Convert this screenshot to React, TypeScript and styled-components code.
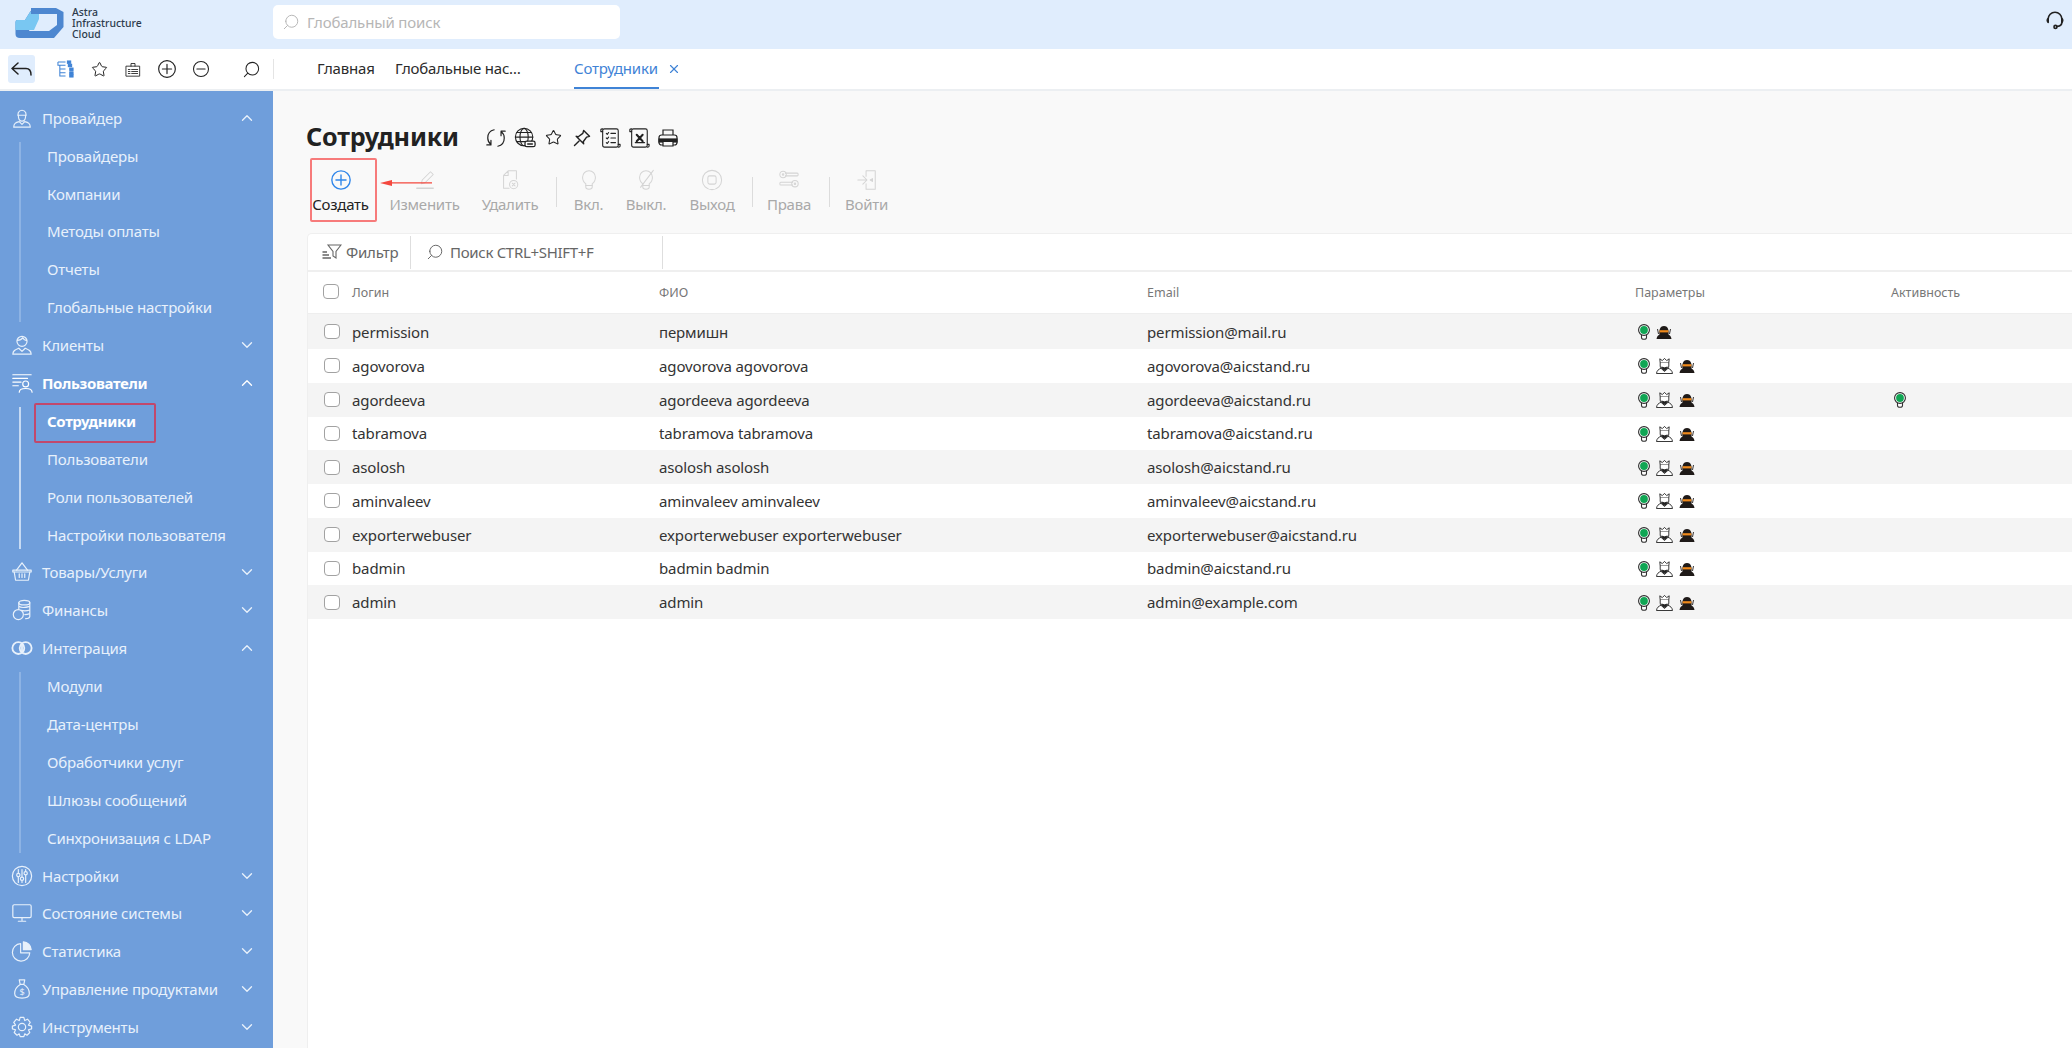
import React from "react";
import styled, { createGlobalStyle } from "styled-components";
import { ChevronDown, ChevronUp, Search, Star, X } from "lucide-react";

const GlobalStyle = createGlobalStyle`
  html, body {
    margin: 0;
    padding: 0;
    height: 100%;
    overflow: hidden;
    background: #fff;
    font-family: "Noto Sans", "Open Sans", sans-serif;
  }
  * { box-sizing: border-box; }
`;

/* ---------- icons ---------- */

const Ico = ({ size = 22, sw = 1.3, children }: { size?: number; sw?: number; children: React.ReactNode }) => (
  <svg width={size} height={size} viewBox="0 0 24 24" fill="none" stroke="currentColor" strokeWidth={sw} strokeLinecap="round" strokeLinejoin="round">
    {children}
  </svg>
);

const LogoIcon = () => (
  <svg width="49" height="32" viewBox="0 0 49 32">
    <path d="M0.5 15 Q0.5 13 2.5 13 H10 L15 5 L18 1 H41 L48.5 5 V20 L39 31 H5 Q0.5 31 0.5 27 Z" fill="#4d87d0" />
    <path d="M18 7 H42 V18 L34 24 H14 L18 14 Z" fill="#e0edfd" />
    <path d="M0.5 23 V15 Q0.5 13 2.5 13 H10 L15 5 H24 V12 L19 23 Z" fill="#79c7f2" />
    <path d="M16 1 H41 V7 H16 Z" fill="#4d87d0" />
  </svg>
);

const Headset = () => (
  <Ico size={22} sw={1.8}>
    <path d="M4.5 14 V11 a7.5 7.5 0 0 1 15 0 V14" />
    <path d="M4.5 10.5 q-1.8 1.5 0 4 z" fill="currentColor" />
    <path d="M19.5 10.5 q1.8 1.5 0 4 z" fill="currentColor" />
    <path d="M19.5 14.5 q0 4 -5 4.5" />
    <circle cx="12.5" cy="19.5" r="1.6" />
  </Ico>
);

const TreeIcon = () => (
  <svg width="18" height="18" viewBox="0 0 18 18" fill="none" stroke="#3f83d6" strokeWidth="1.1">
    <path d="M1 1.5 H9 M1 1.5 V5 H9 M3 5 V16.5 H9 M3 9 H9 M3 13 H9" />
    <rect x="11" y="0.5" width="3.5" height="2.5" fill="#3f83d6" />
    <rect x="12" y="4" width="3.5" height="2.5" fill="#3f83d6" />
    <rect x="13.5" y="8" width="3.5" height="2.5" fill="#3f83d6" />
    <rect x="13.5" y="12" width="3.5" height="2.5" fill="#3f83d6" />
    <rect x="13.5" y="15" width="3.5" height="2.5" fill="#3f83d6" />
  </svg>
);

const ClipIcon = () => (
  <Ico size={21} sw={1.3}>
    <path d="M2 7 H22 V22 H2 Z" />
    <path d="M9 7 V3 H15 V7" />
    <path d="M10 12 H19 M10 15 H19 M10 18 H19 M5 12 H7.5 M5 15 H7.5 M5 18 H7.5" />
  </Ico>
);

const PlusCircle = ({ size = 20, sw = 1.4 }: { size?: number; sw?: number }) => (
  <Ico size={size} sw={sw}>
    <circle cx="12" cy="12" r="10" />
    <path d="M12 6.5 V17.5 M6.5 12 H17.5" />
  </Ico>
);

const MinusCircle = () => (
  <Ico size={20} sw={1.4}>
    <circle cx="12" cy="12" r="10" />
    <path d="M6.5 12 H17.5" />
  </Ico>
);

const BackArrow = () => (
  <svg width="21" height="14" viewBox="0 0 21 14" fill="none" stroke="#222" strokeWidth="1.5" strokeLinecap="round" strokeLinejoin="round">
    <path d="M7 1 L1 6.5 L7 12 M1 6.5 H15 Q20 6.5 20 13" />
  </svg>
);

const MirrorSearch = ({ size = 18 }: { size?: number }) => (
  <Search size={size} strokeWidth={1.3} style={{ transform: "scaleX(-1)" }} />
);

const RefreshIcon = () => (
  <Ico size={22} sw={1.3}>
    <path d="M10 3 C5 4 3 8 3 12 C3 15 4.5 17.5 6.5 19 M6.5 14.5 V19.5 H2" />
    <path d="M14 21 C19 20 21 16 21 12 C21 9 19.5 6.5 17.5 5 M17.5 9.5 V4.5 H22" />
  </Ico>
);

const GlobeIcon = () => (
  <Ico size={22} sw={1.2}>
    <circle cx="11" cy="11" r="9.5" />
    <ellipse cx="11" cy="11" rx="4.5" ry="9.5" />
    <path d="M1.5 11 H20.5 M3 6 H19 M3 16 H13" />
    <rect x="12" y="15.5" width="11" height="6" rx="2" fill="#f9f9f9" strokeWidth="1.4" />
    <path d="M15 18.5 H20" strokeWidth="1.6" />
  </Ico>
);

const PinIcon = () => (
  <Ico size={20} sw={1.7}>
    <path d="M14 3 L21 10 L17.5 11 L13.5 16.5 L14 19 L5 10 L7.5 10.5 L13 6.5 Z" />
    <path d="M8.5 15.5 L3 21" />
  </Ico>
);

const ScrollIcon = () => (
  <Ico size={22} sw={1.2}>
    <path d="M6 2 H19 Q21 2 21 4 V20 Q21 22 19 22 H6 Q4 22 4 20 V4 Q4 2 6 2 Z" />
    <path d="M4 5 H2 V3 Q2 2 4 2 M21 19 H23 V21 Q23 22 21 22" />
    <path d="M8 7 L9 8 L10.5 6 M13 7 H18 M8 12 L9 13 L10.5 11 M13 12 H18 M8 17 L9 18 L10.5 16 M13 17 H18" />
  </Ico>
);

const ExcelIcon = () => (
  <Ico size={22} sw={1.2}>
    <path d="M6 2 H19 Q21 2 21 4 V20 Q21 22 19 22 H6 Q4 22 4 20 V4 Q4 2 6 2 Z" />
    <path d="M4 5 H2 V3 Q2 2 4 2 M21 19 H23 V21 Q23 22 21 22" />
    <path d="M9.5 8.5 L16 15.5 M16 8.5 L9.5 15.5" strokeWidth="2.2" />
    <path d="M8 17 H18" strokeWidth="1.4" />
  </Ico>
);

const PrinterIcon = () => (
  <svg width="20" height="20" viewBox="0 0 20 20" fill="none" stroke="#222" strokeWidth="1.2">
    <path d="M5 7 V2 H15 V7" />
    <rect x="1" y="7" width="18" height="10" rx="2.5" fill="#f9f9f9" />
    <rect x="1" y="11" width="18" height="3" fill="#222" />
    <path d="M5 14 V18 H15 V14" fill="#f9f9f9" />
  </svg>
);

const FilterIcon = () => (
  <svg width="20" height="16" viewBox="0 0 20 16" fill="none" stroke="#666" strokeWidth="1.1">
    <path d="M6 1 H19 L14 7.5 V14 L11 12 V7.5 Z" />
    <path d="M0.5 8 H5 M0.5 11 H7 M0.5 14 H9" strokeWidth="1.4" />
  </svg>
);

const PencilIcon = () => (
  <Ico size={22} sw={1.1}>
    <path d="M8 16 L9 12 L18 3 L21 6 L12 15 Z" />
    <path d="M3 21 H21" strokeWidth="1.4" />
  </Ico>
);

const DocXIcon = () => (
  <Ico size={22} sw={1.1}>
    <path d="M10 2 H19 V11 M10 2 L5 7 V21 H11 M5 7 H10 V2" />
    <circle cx="16" cy="17" r="4.5" />
    <path d="M14.5 15.5 L17.5 18.5 M17.5 15.5 L14.5 18.5" />
  </Ico>
);

const BulbIcon = ({ off }: { off?: boolean }) => (
  <Ico size={22} sw={1.1}>
    <path d="M8.5 18 V16 C6 14.5 5 12.5 5 9 A7 7 0 0 1 19 9 C19 12.5 18 14.5 15.5 16 V18" />
    <path d="M8.5 18 H15.5 V20 Q15.5 22 12 22 Q8.5 22 8.5 20 Z" />
    {off && <path d="M6 20 L20 1.5" />}
  </Ico>
);

const StopIcon = () => (
  <Ico size={22} sw={1.1}>
    <circle cx="12" cy="12" r="10.5" />
    <rect x="7.5" y="7.5" width="9" height="9" rx="2" />
  </Ico>
);

const RightsIcon = () => (
  <Ico size={22} sw={1.1}>
    <path d="M8 4.5 H21 Q22 4.5 22 6 Q22 7.5 21 7.5 H8" />
    <circle cx="5.5" cy="6" r="3.5" />
    <circle cx="5.5" cy="6" r="0.8" />
    <path d="M16 14.5 H3 Q2 14.5 2 16 Q2 17.5 3 17.5 H16" />
    <circle cx="18.5" cy="16" r="3.5" />
    <circle cx="18.5" cy="16" r="0.8" />
  </Ico>
);

const EnterIcon = () => (
  <Ico size={22} sw={1.1}>
    <path d="M11 8 V2 H21 V22 H11 V16" />
    <path d="M2 12 H11 M7.5 7.5 L12 12 L7.5 16.5" />
    <path d="M18 10.5 L15.5 12 L18 13.5 Z" fill="currentColor" />
  </Ico>
);

const ProviderIcon = () => (
  <Ico>
    <path d="M8 6 A4.5 4.5 0 0 1 16 6 L16.5 9 H7.5 Z" />
    <path d="M8 9 C8 14 10 15.5 12 15.5 C14 15.5 16 14 16 9" />
    <path d="M3 22 C3 18 5 17 9 16 L12 19 L15 16 C19 17 21 18 21 22 Z" />
  </Ico>
);

const ClientIcon = () => (
  <Ico>
    <circle cx="12" cy="8" r="5.5" />
    <path d="M7 7 Q11 7 13 4 Q14 7 17 7" />
    <path d="M2 22 C2 18 5 17 8.5 15.5 L12 19 L15.5 15.5 C19 17 22 18 22 22 Z" />
  </Ico>
);

const UsersIcon = () => (
  <Ico>
    <path d="M2 3 H22 M2 7 H18 M2 11 H11 M2 15 H8" />
    <circle cx="16" cy="13" r="3.2" />
    <path d="M9 22 C9 18.5 12 18 16 18 C20 18 23 18.5 23 22" />
  </Ico>
);

const BasketIcon = () => (
  <Ico>
    <path d="M2 10 H22 V12 H2 Z" />
    <path d="M3.5 12 L5 21 H19 L20.5 12" />
    <path d="M6 10 L12 2 L18 10 M9 14 V18 M12 14 V18 M15 14 V18" />
  </Ico>
);

const CoinsIcon = () => (
  <Ico>
    <ellipse cx="14.5" cy="4" rx="6" ry="2.5" />
    <path d="M8.5 4 V11 M20.5 4 V19 Q20.5 21 16 21.5 M8.5 8 Q12 10.5 20.5 8 M11 12.5 Q16 13.5 20.5 12 M15 17 Q18 17 20.5 16" />
    <circle cx="8" cy="17" r="5.5" />
  </Ico>
);

const IntegrationIcon = () => (
  <Ico>
    <circle cx="8" cy="12" r="6.5" strokeWidth="2" />
    <circle cx="16" cy="12" r="6.5" strokeWidth="2" />
    <path d="M12 7 V17" strokeWidth="2" />
  </Ico>
);

const TuneIcon = () => (
  <Ico>
    <circle cx="12" cy="12" r="10.5" />
    <path d="M8 5 V9 M8 13 V19 M12 5 V13 M12 17 V19 M16 5 V7 M16 11 V19" />
    <circle cx="8" cy="11" r="1.8" />
    <circle cx="12" cy="15" r="1.8" />
    <circle cx="16" cy="9" r="1.8" />
  </Ico>
);

const MonitorIcon = () => (
  <Ico>
    <rect x="2" y="3" width="20" height="14" rx="1.5" />
    <path d="M12 17 V20 M8 21 H16" />
  </Ico>
);

const PieIcon = () => (
  <Ico>
    <path d="M10.5 4 A9.5 9.5 0 1 0 20.5 14 H10.5 Z" />
    <path d="M13.5 2 A9 9 0 0 1 22 10.5 H13.5 Z" fill="currentColor" />
  </Ico>
);

const MoneyIcon = () => (
  <Ico>
    <path d="M9 2 H15 L14 7 H10 Z M10 7 C5 10 4 14 4 17 C4 20 7 22 12 22 C17 22 20 20 20 17 C20 14 19 10 14 7" />
    <text x="12" y="19" textAnchor="middle" fontSize="10" fill="currentColor" stroke="none" fontFamily="Noto Sans">$</text>
  </Ico>
);

const GearIcon = () => (
  <Ico>
    <path d="M10 1.5 H14 L15 5 L18 3.5 L21 7 L19 10 L22.5 11 V14 L19 15 L20.5 18 L17.5 21 L15 19.5 L14 22.5 H10 L9 19.5 L6.5 21 L3.5 18 L5 15 L1.5 14 V11 L5 10 L3 7 L6 3.5 L9 5 Z" />
    <circle cx="12" cy="12" r="4" />
  </Ico>
);

const GreenBulb = () => (
  <svg width="12" height="16" viewBox="0 0 12 16">
    <path d="M3.5 11 V13.5 Q3.5 15.3 6 15.3 Q8.5 15.3 8.5 13.5 V11" fill="#fff" stroke="#333" strokeWidth="1.1" />
    <circle cx="6" cy="6" r="5.4" fill="#fff" stroke="#2b2b2b" strokeWidth="1.1" />
    <circle cx="6" cy="6" r="3.9" fill="#10a654" />
  </svg>
);

const KingIcon = () => (
  <svg width="17" height="16" viewBox="0 0 17 16" fill="none" stroke="#222" strokeWidth="0.9">
    <path d="M4.2 5 L3.8 0.8 L6.3 2.6 L8.5 0.4 L10.7 2.6 L13.2 0.8 L12.8 5 Z" fill="#fff" />
    <path d="M4.2 5 V8 C4.2 10.5 6 12 8.5 12.6 C11 12 12.8 10.5 12.8 8 V5" fill="#fff" />
    <path d="M5.5 9 Q8.5 10.6 11.5 9 L10.5 11 L8.5 12 L6.5 11 Z" fill="#222" />
    <path d="M0.5 15.5 C0.8 12.6 2.5 11.3 5 10.3 L8.5 13.5 L12 10.3 C14.5 11.3 16.2 12.6 16.5 15.5 Z" fill="#fff" />
  </svg>
);

const NinjaIcon = () => (
  <svg width="16" height="14" viewBox="0 0 16 14">
    <path d="M0.5 14 C1 11 2 10.5 3.5 9.5 C3 6 3.5 1 8 1 C12.5 1 13 6 12.5 9.5 C14 10.5 15 11 15.5 14 Z" fill="#1f1a18" />
    <rect x="3.6" y="5.2" width="8.8" height="2.2" fill="#f08a1c" />
    <path d="M1.5 4 L2.5 9 M14.5 4 L13.5 9" stroke="#1f1a18" strokeWidth="0.9" />
  </svg>
);

/* ---------- layout ---------- */

const Page = styled.div`
  display: flex;
  flex-direction: column;
  height: 1048px;
  overflow: hidden;
  background: #fff;
`;

const TopBar = styled.header`
  display: flex;
  align-items: flex-start;
  flex: 0 0 49px;
  padding-top: 5px;
  background: #e0edfd;
`;

const LogoBox = styled.div`
  display: flex;
  align-items: center;
  width: 273px;
  height: 36px;
  padding-left: 15px;
  gap: 8px;
`;

const LogoText = styled.div`
  font-size: 10.4px;
  line-height: 11px;
  font-weight: 500;
  color: #2c3a4b;
`;

const GlobalSearch = styled.div`
  display: flex;
  align-items: center;
  gap: 7px;
  width: 347px;
  height: 34px;
  padding-left: 9px;
  background: #fff;
  border-radius: 5px;
  color: #b6b6b6;
  font-size: 15px;
  letter-spacing: -0.15px;
`;

const Support = styled.div`
  margin-left: auto;
  margin-right: 6px;
  display: flex;
  padding-top: 4px;
  color: #222;
`;

const NavRow = styled.nav`
  display: flex;
  align-items: center;
  flex: 0 0 42px;
  background: #fff;
  border-bottom: 2px solid #eceff2;
`;

const NavTools = styled.div`
  display: flex;
  align-items: center;
  width: 274px;
  height: 20px;
  padding-left: 8px;
  border-right: 1px solid #e4e4e4;
  color: #222;
`;

const BackBtn = styled.div`
  display: flex;
  align-items: center;
  justify-content: center;
  flex: none;
  width: 27px;
  height: 28px;
  margin-right: 22px;
  background: #e0edfd;
  border-radius: 3px;
`;

const NavIcon = styled.div<{ $w: number }>`
  display: flex;
  justify-content: center;
  flex: none;
  width: ${(p) => p.$w}px;
`;

const Tabs = styled.div`
  display: flex;
  align-items: stretch;
  height: 40px;
  padding-left: 43px;
`;

const Tab = styled.div<{ $active?: boolean; $w: number }>`
  display: flex;
  align-items: center;
  width: ${(p) => p.$w}px;
  margin-right: 21px;
  font-size: 15px;
  letter-spacing: -0.2px;
  white-space: nowrap;
  color: ${(p) => (p.$active ? "#3f83d6" : "#2b2b2b")};
  border-bottom: 2px solid ${(p) => (p.$active ? "#3f83d6" : "transparent")};
`;

const TabClose = styled.div`
  display: flex;
  align-items: center;
  margin-left: -13px;
  color: #3f83d6;
`;

const Body = styled.div`
  display: flex;
  flex: 1;
  min-height: 0;
`;

const Sidebar = styled.aside`
  flex: 0 0 273px;
  padding-top: 7.8px;
  background: #6f9edb;
  color: #e8f1fb;
  overflow: hidden;
`;

const SideHead = styled.div<{ $active?: boolean }>`
  display: flex;
  align-items: center;
  height: 37.9px;
  padding-left: 11px;
  font-size: 15px;
  letter-spacing: ${(p) => (p.$active ? "-0.35px" : "-0.18px")};
  font-weight: ${(p) => (p.$active ? 700 : 400)};
  color: ${(p) => (p.$active ? "#fff" : "inherit")};
`;

const SideLabel = styled.span`
  margin-left: 9px;
  flex: 1;
  white-space: nowrap;
`;

const Chevron = styled.div`
  display: flex;
  margin-right: 17px;
`;

const SideList = styled.div<{ $bright?: boolean }>`
  position: relative;
  padding-left: 47px;
  &::before {
    content: "";
    position: absolute;
    left: 19px;
    top: 5px;
    bottom: 4px;
    width: 2px;
    background: ${(p) => (p.$bright ? "#c6daf3" : "#8db3e4")};
  }
`;

const SideItem = styled.div<{ $active?: boolean }>`
  position: relative;
  display: flex;
  align-items: center;
  height: 37.9px;
  font-size: 15px;
  letter-spacing: ${(p) => (p.$active ? "-0.35px" : "-0.18px")};
  white-space: nowrap;
  font-weight: ${(p) => (p.$active ? 700 : 400)};
  color: ${(p) => (p.$active ? "#fff" : "inherit")};
`;

const ActiveMark = styled.div`
  position: absolute;
  left: -13px;
  top: 1px;
  width: 122px;
  height: 40px;
  border: 2px solid #c1486c;
  border-radius: 2px;
`;

const Main = styled.main`
  flex: 1;
  display: flex;
  flex-direction: column;
  min-width: 0;
  padding: 28px 0 0 34px;
  background: #f9f9f9;
`;

const TitleRow = styled.div`
  display: flex;
  align-items: center;
  height: 37px;
  color: #222;
`;

const Title = styled.h1`
  margin: -3px 23px 0 -1px;
  font-size: 25.2px;
  font-weight: 700;
  letter-spacing: -0.2px;
  color: #222;
`;

const TitleIcon = styled.div`
  display: flex;
  justify-content: center;
  flex: none;
  width: 28.6px;
`;

const Toolbar = styled.div`
  position: relative;
  display: flex;
  align-items: flex-start;
  height: 64px;
  margin: 2px 0 11px;
`;

const ToolBtn = styled.div<{ $w: number; $on?: boolean }>`
  display: flex;
  flex-direction: column;
  align-items: center;
  width: ${(p) => p.$w}px;
  padding-top: 11px;
  color: ${(p) => (p.$on ? "#222" : "#a9a9a9")};
  font-size: 15px;
  letter-spacing: -0.25px;
  line-height: 20px;
  white-space: nowrap;
`;

const ToolIcon = styled.div<{ $on?: boolean }>`
  display: flex;
  height: 24px;
  margin-bottom: 1px;
  color: ${(p) => (p.$on ? "#2f86ea" : "#d4d4d4")};
`;

const ToolSep = styled.div<{ $ml?: number }>`
  width: 1px;
  height: 30px;
  margin: 19px 0 0 ${(p) => p.$ml ?? 0}px;
  background: #dcdcdc;
`;

const CreateMark = styled.div`
  position: absolute;
  left: 3px;
  top: 0;
  width: 67px;
  height: 64px;
  border: 2px solid #f77b7b;
  border-radius: 2px;
`;

const ArrowMark = styled.svg`
  position: absolute;
  left: 73px;
  top: 21px;
`;

const Panel = styled.section`
  flex: 1;
  min-height: 0;
  background: #fff;
  border-top: 1px solid #efefef;
  border-left: 1px solid #efefef;
  border-top-left-radius: 5px;
`;

const FilterBar = styled.div`
  display: flex;
  align-items: center;
  height: 38px;
  border-bottom: 2px solid #efefef;
  color: #666;
  font-size: 15px;
  letter-spacing: -0.25px;
`;

const FilterBtn = styled.div`
  display: flex;
  align-items: center;
  gap: 4px;
  width: 103px;
  height: 33px;
  padding-left: 14px;
  border-right: 1px solid #dedede;
`;

const FilterSearch = styled.div`
  display: flex;
  align-items: center;
  gap: 6px;
  width: 252px;
  height: 33px;
  padding-left: 15px;
  letter-spacing: -0.3px;
  border-right: 1px solid #dedede;
`;

const Grid = styled.div`
  display: grid;
  grid-template-columns: 44px 307px 488px 488px 256px 1fr;
  align-items: center;
`;

const HeadRow = styled(Grid)`
  height: 42px;
  border-bottom: 1px solid #eeeeee;
  font-size: 12.5px;
  color: #777;
`;

const Row = styled(Grid)`
  height: 33.75px;
  font-size: 15px;
  letter-spacing: -0.12px;
  color: #333;
  &:first-of-type {
    height: 35px;
  }
  &:nth-child(odd) {
    background: #f4f4f4;
  }
`;

const CheckCell = styled.div<{ $head?: boolean }>`
  display: flex;
  padding-left: ${(p) => (p.$head ? 15 : 16)}px;
  margin-top: ${(p) => (p.$head ? -2 : 0)}px;
`;

const Check = styled.div`
  width: 16px;
  height: 15px;
  background: #fff;
  border: 1px solid #a2a2a2;
  border-radius: 4px;
`;

const Params = styled.div`
  display: flex;
  align-items: center;
  gap: 6px;
  padding: 1px 0 0 3px;
`;

/* ---------- data ---------- */

const providerKids = ["Провайдеры", "Компании", "Методы оплаты", "Отчеты", "Глобальные настройки"];
const userKids = ["Сотрудники", "Пользователи", "Роли пользователей", "Настройки пользователя"];
const integrationKids = ["Модули", "Дата-центры", "Обработчики услуг", "Шлюзы сообщений", "Синхронизация с LDAP"];

const rows = [
  { login: "permission", fio: "пермишн", email: "permission@mail.ru", king: false },
  { login: "agovorova", fio: "agovorova agovorova", email: "agovorova@aicstand.ru", king: true },
  { login: "agordeeva", fio: "agordeeva agordeeva", email: "agordeeva@aicstand.ru", king: true, active: true },
  { login: "tabramova", fio: "tabramova tabramova", email: "tabramova@aicstand.ru", king: true },
  { login: "asolosh", fio: "asolosh asolosh", email: "asolosh@aicstand.ru", king: true },
  { login: "aminvaleev", fio: "aminvaleev aminvaleev", email: "aminvaleev@aicstand.ru", king: true },
  { login: "exporterwebuser", fio: "exporterwebuser exporterwebuser", email: "exporterwebuser@aicstand.ru", king: true },
  { login: "badmin", fio: "badmin badmin", email: "badmin@aicstand.ru", king: true },
  { login: "admin", fio: "admin", email: "admin@example.com", king: true },
];

const Head = ({ icon, label, open, active }: { icon: React.ReactNode; label: string; open?: boolean; active?: boolean }) => (
  <SideHead $active={active}>
    {icon}
    <SideLabel>{label}</SideLabel>
    <Chevron>{open ? <ChevronUp size={18} strokeWidth={1.8} /> : <ChevronDown size={18} strokeWidth={1.8} />}</Chevron>
  </SideHead>
);

export default function App() {
  return (
    <Page>
      <GlobalStyle />
      <TopBar>
        <LogoBox>
          <LogoIcon />
          <LogoText>
            Astra
            <br />
            Infrastructure
            <br />
            Cloud
          </LogoText>
        </LogoBox>
        <GlobalSearch>
          <MirrorSearch size={18} />
          Глобальный поиск
        </GlobalSearch>
        <Support>
          <Headset />
        </Support>
      </TopBar>

      <NavRow>
        <NavTools>
          <BackBtn>
            <BackArrow />
          </BackBtn>
          <NavIcon $w={17}>
            <TreeIcon />
          </NavIcon>
          <NavIcon $w={51}>
            <Star size={17} strokeWidth={1.4} />
          </NavIcon>
          <NavIcon $w={16}>
            <ClipIcon />
          </NavIcon>
          <NavIcon $w={51}>
            <PlusCircle />
          </NavIcon>
          <NavIcon $w={18}>
            <MinusCircle />
          </NavIcon>
          <NavIcon $w={82}>
            <MirrorSearch size={19} />
          </NavIcon>
        </NavTools>
        <Tabs>
          <Tab $w={57}>Главная</Tab>
          <Tab $w={158}>Глобальные нас…</Tab>
          <Tab $active $w={85}>
            Сотрудники
          </Tab>
          <TabClose>
            <X size={14} strokeWidth={2} />
          </TabClose>
        </Tabs>
      </NavRow>

      <Body>
        <Sidebar>
          <Head icon={<ProviderIcon />} label="Провайдер" open />
          <SideList>
            {providerKids.map((k) => (
              <SideItem key={k}>{k}</SideItem>
            ))}
          </SideList>
          <Head icon={<ClientIcon />} label="Клиенты" />
          <Head icon={<UsersIcon />} label="Пользователи" open active />
          <SideList $bright>
            {userKids.map((k, i) => (
              <SideItem key={k} $active={i === 0}>
                {k}
                {i === 0 && <ActiveMark />}
              </SideItem>
            ))}
          </SideList>
          <Head icon={<BasketIcon />} label="Товары/Услуги" />
          <Head icon={<CoinsIcon />} label="Финансы" />
          <Head icon={<IntegrationIcon />} label="Интеграция" open />
          <SideList>
            {integrationKids.map((k) => (
              <SideItem key={k}>{k}</SideItem>
            ))}
          </SideList>
          <Head icon={<TuneIcon />} label="Настройки" />
          <Head icon={<MonitorIcon />} label="Состояние системы" />
          <Head icon={<PieIcon />} label="Статистика" />
          <Head icon={<MoneyIcon />} label="Управление продуктами" />
          <Head icon={<GearIcon />} label="Инструменты" />
        </Sidebar>

        <Main>
          <TitleRow>
            <Title>Сотрудники</Title>
            <TitleIcon>
              <RefreshIcon />
            </TitleIcon>
            <TitleIcon>
              <GlobeIcon />
            </TitleIcon>
            <TitleIcon>
              <Star size={17} strokeWidth={1.5} />
            </TitleIcon>
            <TitleIcon>
              <PinIcon />
            </TitleIcon>
            <TitleIcon>
              <ScrollIcon />
            </TitleIcon>
            <TitleIcon>
              <ExcelIcon />
            </TitleIcon>
            <TitleIcon>
              <PrinterIcon />
            </TitleIcon>
          </TitleRow>

          <Toolbar>
            <ToolBtn $w={67} $on>
              <ToolIcon $on>
                <PlusCircle size={22} sw={1.5} />
              </ToolIcon>
              Создать
            </ToolBtn>
            <ToolBtn $w={101}>
              <ToolIcon>
                <PencilIcon />
              </ToolIcon>
              Изменить
            </ToolBtn>
            <ToolBtn $w={70}>
              <ToolIcon>
                <DocXIcon />
              </ToolIcon>
              Удалить
            </ToolBtn>
            <ToolSep $ml={11} />
            <ToolBtn $w={63}>
              <ToolIcon>
                <BulbIcon />
              </ToolIcon>
              Вкл.
            </ToolBtn>
            <ToolBtn $w={52}>
              <ToolIcon>
                <BulbIcon off />
              </ToolIcon>
              Выкл.
            </ToolBtn>
            <ToolBtn $w={80}>
              <ToolIcon>
                <StopIcon />
              </ToolIcon>
              Выход
            </ToolBtn>
            <ToolSep />
            <ToolBtn $w={72}>
              <ToolIcon>
                <RightsIcon />
              </ToolIcon>
              Права
            </ToolBtn>
            <ToolSep $ml={4} />
            <ToolBtn $w={73}>
              <ToolIcon>
                <EnterIcon />
              </ToolIcon>
              Войти
            </ToolBtn>
            <CreateMark />
            <ArrowMark width="52" height="8" viewBox="0 0 52 8">
              <path d="M0 4 L12 1 L12 3.2 H52 V4.6 H12 V7 Z" fill="#f4483e" />
            </ArrowMark>
          </Toolbar>

          <Panel>
            <FilterBar>
              <FilterBtn>
                <FilterIcon />
                Фильтр
              </FilterBtn>
              <FilterSearch>
                <MirrorSearch size={18} />
                Поиск CTRL+SHIFT+F
              </FilterSearch>
            </FilterBar>
            <HeadRow>
              <CheckCell $head>
                <Check />
              </CheckCell>
              <div>Логин</div>
              <div>ФИО</div>
              <div>Email</div>
              <div>Параметры</div>
              <div>Активность</div>
            </HeadRow>
            <div>
              {rows.map((r) => (
                <Row key={r.login}>
                  <CheckCell>
                    <Check />
                  </CheckCell>
                  <div>{r.login}</div>
                  <div>{r.fio}</div>
                  <div>{r.email}</div>
                  <Params>
                    <GreenBulb />
                    {r.king && <KingIcon />}
                    <NinjaIcon />
                  </Params>
                  <Params>{r.active && <GreenBulb />}</Params>
                </Row>
              ))}
            </div>
          </Panel>
        </Main>
      </Body>
    </Page>
  );
}
